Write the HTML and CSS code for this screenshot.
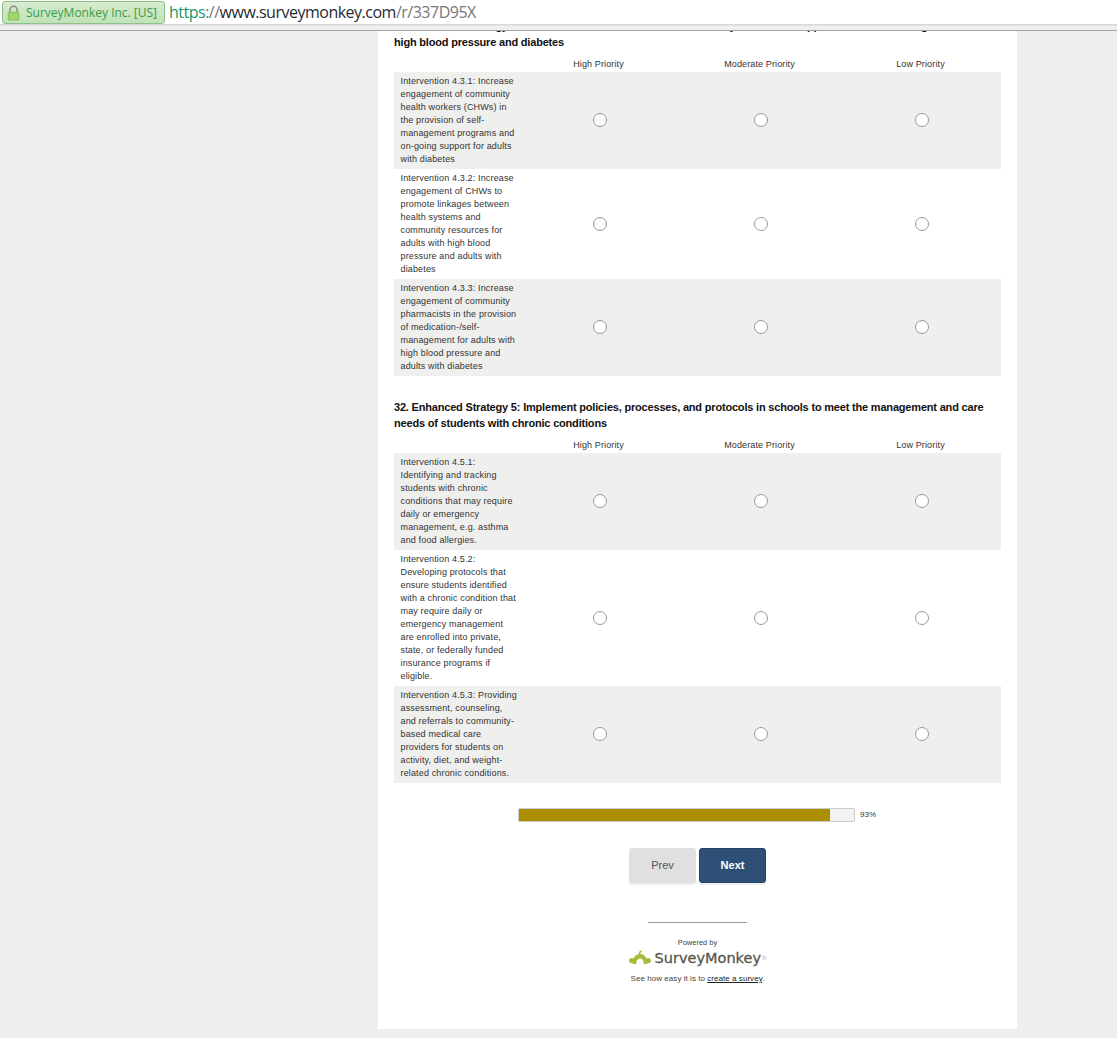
FILE: index.html
```html
<!DOCTYPE html>
<html lang="en">
<head>
<meta charset="utf-8">
<title>SurveyMonkey survey</title>
<link rel="stylesheet" href="styles.css">
</head>
<body>
<header class="chrome">
  <div class="identity">
    <svg class="lock" viewBox="0 0 14 18" width="13" height="16" aria-hidden="true">
      <path d="M3 9V5.5a4 4 0 0 1 8 0V9" fill="none" stroke="#8a8f86" stroke-width="1.7"/>
      <rect x="1" y="8" width="12" height="9" rx="1" fill="#9fd46a" stroke="#7fae4e" stroke-width=".8"/>
    </svg>
    <span>SurveyMonkey Inc. [US]</span>
  </div>
  <div class="url"><span class="scheme">https</span><span class="dim">://</span>www.surveymonkey.com<span class="dim">/r/337D95X</span></div>
</header>
<div class="viewport">
<main class="card">
  <section class="question">
    <h2 class="q-title">31. Enhanced Strategy 4: Increase the health center and community teams that support more adults living with<br>high blood pressure and diabetes</h2>
    <div class="row head"><span></span><span>High Priority</span><span>Moderate Priority</span><span>Low Priority</span></div>
    <div class="row shade">
      <div class="label">Intervention 4.3.1: Increase engagement of community health workers (CHWs) in the provision of self-management programs and on-going support for adults with diabetes</div>
      <div class="cell"><input type="radio" name="a1"></div><div class="cell"><input type="radio" name="a1"></div><div class="cell"><input type="radio" name="a1"></div>
    </div>
    <div class="row">
      <div class="label">Intervention 4.3.2: Increase engagement of CHWs to promote linkages between health systems and community resources for adults with high blood pressure and adults with diabetes</div>
      <div class="cell"><input type="radio" name="a2"></div><div class="cell"><input type="radio" name="a2"></div><div class="cell"><input type="radio" name="a2"></div>
    </div>
    <div class="row shade">
      <div class="label">Intervention 4.3.3: Increase engagement of community pharmacists in the provision of medication-/self-management for adults with high blood pressure and adults with diabetes</div>
      <div class="cell"><input type="radio" name="a3"></div><div class="cell"><input type="radio" name="a3"></div><div class="cell"><input type="radio" name="a3"></div>
    </div>
  </section>
  <section class="question">
    <h2 class="q-title">32. Enhanced Strategy 5: Implement policies, processes, and protocols in schools to meet the management and care needs of students with chronic conditions</h2>
    <div class="row head"><span></span><span>High Priority</span><span>Moderate Priority</span><span>Low Priority</span></div>
    <div class="row shade">
      <div class="label">Intervention 4.5.1: Identifying and tracking students with chronic conditions that may require daily or emergency management, e.g. asthma and food allergies.</div>
      <div class="cell"><input type="radio" name="b1"></div><div class="cell"><input type="radio" name="b1"></div><div class="cell"><input type="radio" name="b1"></div>
    </div>
    <div class="row">
      <div class="label">Intervention 4.5.2: Developing protocols that ensure students identified with a chronic condition that may require daily or emergency management are enrolled into private, state, or federally funded insurance programs if eligible.</div>
      <div class="cell"><input type="radio" name="b2"></div><div class="cell"><input type="radio" name="b2"></div><div class="cell"><input type="radio" name="b2"></div>
    </div>
    <div class="row shade">
      <div class="label">Intervention 4.5.3: Providing assessment, counseling, and referrals to community-based medical care providers for students on activity, diet, and weight-related chronic conditions.</div>
      <div class="cell"><input type="radio" name="b3"></div><div class="cell"><input type="radio" name="b3"></div><div class="cell"><input type="radio" name="b3"></div>
    </div>
  </section>
  <div class="progress">
    <div class="track"><div class="fill"></div></div>
    <span class="pct">93%</span>
  </div>
  <div class="buttons">
    <button class="btn prev" type="button">Prev</button>
    <button class="btn next" type="button">Next</button>
  </div>
  <footer class="foot">
    <hr class="rule">
    <div class="powered">Powered by</div>
    <div class="logo">
      <svg class="mark" viewBox="0 0 22 16" width="22" height="16" aria-hidden="true">
        <path d="M3.6 14C3.6 7.6 6.6 4 11 4s7.4 3.6 7.4 10h-3.6C14.8 10.8 13.4 8.6 11 8.6S7.2 10.8 7.2 14Z" fill="#a3bd3a"/>
        <path d="M10.6 4.4C10.4 2.8 11 1.4 12.6 1" fill="none" stroke="#a3bd3a" stroke-width="1.5"/>
        <circle cx="2.8" cy="10.6" r="2.7" fill="#a3bd3a"/>
        <circle cx="19.2" cy="10.6" r="2.7" fill="#a3bd3a"/>
      </svg>
      <span class="wordmark">SurveyMonkey</span><span class="reg">®</span>
    </div>
    <p class="tagline">See how easy it is to <a href="#">create a survey</a>.</p>
  </footer>
</main>
</div>
</body>
</html>
```

FILE: styles.css
```css
* { box-sizing: border-box; }
html, body { margin: 0; padding: 0; }
body {
  background: #eeeeee;
  font-family: "Liberation Sans", Arial, sans-serif;
  color: #222;
}
.chrome {
  height: 31px;
  display: flex;
  align-items: flex-start;
  gap: 4px;
  padding: 1px 0 0 2px;
  background: linear-gradient(#fff 0, #fff 24px, #dcdcdc 24px, #d4d4d4 25px, #efefef 26px, #efefef 30px, #a4a4a4 30px);
}
.identity {
  width: 163px;
  height: 23px;
  display: flex;
  align-items: center;
  gap: 6px;
  padding-left: 4px;
  border: 1px solid #8fc08b;
  border-radius: 3px;
  background: linear-gradient(#d6eccf, #bfe2b8);
  font: 12px "Open Sans", sans-serif;
  color: #3b9a47;
  white-space: nowrap;
}
.lock { flex: none; }
.url {
  font: 16px/23px "Open Sans", sans-serif;
  letter-spacing: -.5px;
  color: #1f2a33;
  white-space: nowrap;
}
.scheme { color: #14976a; }
.dim { color: #767676; }
.viewport {
  height: 1007px;
  overflow: hidden;
}
.card {
  width: 639px;
  margin: -13px 0 0 378px;
  height: 1011px;
  padding: 0 16px;
  background: #fff;
}
.question { margin-bottom: 23px; }
.q-title {
  margin: 0 0 7px;
  font-size: 11px;
  font-weight: bold;
  line-height: 16px;
  letter-spacing: -.19px;
  color: #111;
}
.row {
  display: grid;
  grid-template-columns: 125px repeat(3, 161px);
  width: 607px;
}
.head {
  height: 15px;
  font-size: 9px;
  line-height: 15px;
  letter-spacing: .13px;
  text-align: center;
  color: #333;
}
.head span { padding-right: 2px; }
.shade { background: #efefed; }
.label {
  padding: 3px 0 3px 6.5px;
  width: 125px;
  font-size: 9px;
  line-height: 13px;
  letter-spacing: .15px;
  color: #333;
}
.cell {
  display: flex;
  align-items: center;
  justify-content: center;
  padding-bottom: 1px;
}
input[type="radio"] {
  appearance: none;
  width: 14px;
  height: 14px;
  margin: 0;
  background: #fff;
  border: 1px solid #999;
  border-radius: 50%;
}
.progress {
  display: flex;
  align-items: center;
  gap: 5px;
  margin-left: 124px;
  height: 14px;
  margin-top: 25px;
}
.track {
  width: 337px;
  height: 14px;
  border: 1px solid #ccc;
  border-radius: 2px;
  background: #f2f2f2;
}
.fill { width: 92.8%; height: 100%; background: #ab8d00; }
.pct { margin-bottom: 2px; font-size: 8px; color: #333; }
.buttons {
  display: flex;
  justify-content: center;
  gap: 3px;
  margin-top: 26px;
}
.btn {
  width: 67px;
  height: 35px;
  padding: 0 0 2px;
  border-radius: 3px;
  font: 11px "Liberation Sans", Arial, sans-serif;
  box-shadow: 0 2px 0 #eeeeee;
}
.prev { background: #e0e0e0; border: 0; color: #555; }
.next { background: #2e5077; border: 1px solid #264468; color: #fff; font-weight: bold; }
.foot { text-align: center; }
.rule {
  width: 99px;
  height: 1px;
  margin: 39px auto 0;
  border: 0;
  background: #999;
}
.powered { margin-top: 15px; font-size: 7.5px; line-height: 9px; color: #444; }
.logo {
  display: flex;
  align-items: center;
  justify-content: center;
  gap: 4px;
  height: 18px;
  margin-top: 2px;
}
.wordmark {
  font: 14.5px/18px "DejaVu Sans", sans-serif;
  -webkit-text-stroke: .3px #56564c;
  color: #56564c;
}
.reg { font-size: 6px; color: #aaa; margin-left: -3px; }
.tagline { margin: 6px 0 0; font-size: 8px; line-height: 11px; letter-spacing: .05px; color: #444; }
.tagline a { color: #222; }
```
